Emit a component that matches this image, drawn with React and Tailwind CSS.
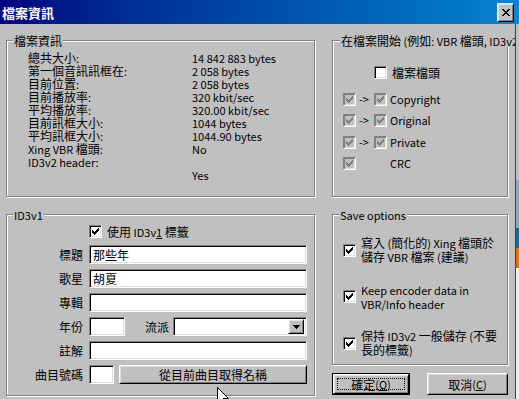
import React from 'react';

// classic win9x bevels
const sunken = 'border border-t-[#808080] border-l-[#808080] border-b-white border-r-white shadow-[inset_1px_1px_0_#000,inset_-1px_-1px_0_#dfdfdf]';
const raised = 'bg-[#c0c0c0] border border-t-white border-l-white border-b-black border-r-black shadow-[inset_1px_1px_0_#dfdfdf,inset_-1px_-1px_0_#808080]';
const etched = 'border border-[#808080] shadow-[inset_1px_1px_0_#fff,1px_1px_0_#fff] p-0 m-0 min-w-0';

// latin runs are narrower than the cjk glyphs in the original font
const tx = (s) =>
  s.split(/([\x20-\x7e]+)/).map((p, i) =>
    i % 2 ? (
      <span key={i} className="text-[11px]">
        {p}
      </span>
    ) : (
      p
    )
  );

const checkPx = [
  [6, 0, 1], [5, 1, 2], [0, 2, 1], [4, 2, 3], [0, 3, 2], [3, 3, 3], [0, 4, 5], [1, 5, 3], [2, 6, 1],
];

function Check({ checked, disabled }) {
  return (
    <span
      className={`w-[13px] h-[13px] shrink-0 flex items-center justify-center border border-t-[#808080] border-l-[#808080] border-b-white border-r-white ${
        disabled
          ? 'bg-[#c0c0c0] shadow-[inset_1px_1px_0_#808080,inset_-1px_-1px_0_#dfdfdf]'
          : 'bg-white shadow-[inset_1px_1px_0_#000,inset_-1px_-1px_0_#dfdfdf]'
      }`}
    >
      {checked && (
        <svg width="7" height="7" viewBox="0 0 7 7" shapeRendering="crispEdges">
          {checkPx.map(([x, y, w], i) => (
            <rect key={i} x={x} y={y} width={w} height="1" fill={disabled ? '#808080' : '#000'} />
          ))}
        </svg>
      )}
    </span>
  );
}

function Group({ title, className, legendClass = 'ml-[6px]', children }) {
  return (
    <fieldset className={`${etched} ${className}`}>
      <legend className={`${legendClass} px-[1px] h-[13px] leading-[13px] whitespace-nowrap bg-[#c0c0c0]`}>{tx(title)}</legend>
      {children}
    </fieldset>
  );
}

const info = [
  ['總共大小:', '14 842 883 bytes'],
  ['第一個音訊訊框在:', '2 058 bytes'],
  ['目前位置:', '2 058 bytes'],
  ['目前播放率:', '320 kbit/sec'],
  ['平均播放率:', '320.00 kbit/sec'],
  ['目前訊框大小:', '1044 bytes'],
  ['平均訊框大小:', '1044.90 bytes'],
  ['Xing VBR 檔頭:', 'No'],
  ['ID3v2 header:', ''],
  ['', 'Yes'],
];

const flags = [
  ['Copyright', true],
  ['Original', true],
  ['Private', true],
  ['CRC', false],
];

function Field({ label, children }) {
  return (
    <div className="flex items-center h-[19px]">
      <span className="w-[77px] text-right pr-[1px]">{label}</span>
      <div className="ml-[5px] flex items-center">{children}</div>
    </div>
  );
}

function Input({ w, value }) {
  return (
    <div className={`${sunken} bg-white h-[19px] flex items-center pl-[3px]`} style={{ width: w }}>
      {value}
    </div>
  );
}

export default function App() {
  return (
    <div className="w-[519px] h-[399px] overflow-hidden relative bg-[#c0c0c0] text-black text-[12px] leading-[13px] font-['Noto_Sans_CJK_TC',sans-serif] flex flex-col">
      <div className="h-[24px] shrink-0 flex items-center bg-linear-to-r from-[#000080] to-[#1084d0] pl-[2px] pr-[5px]">
        <span className="text-white font-bold text-[13px] leading-[15px]">檔案資訊</span>
        <button className={`${raised} ml-auto w-[17px] h-[19px] flex items-center justify-center`}>
          <svg width="8" height="7" viewBox="0 0 8 7" shapeRendering="crispEdges">
            <path d="M0 0h2v1h-2zM6 0h2v1h-2zM1 1h2v1h-2zM5 1h2v1h-2zM2 2h4v1h-4zM3 3h2v1h-2zM2 4h4v1h-4zM1 5h2v1h-2zM5 5h2v1h-2zM0 6h2v1h-2zM6 6h2v1h-2z" fill="#000" />
          </svg>
        </button>
      </div>

      <div className="flex-1 flex min-h-0">
        <div className="w-[516px] shrink-0 border-r border-[#404040] overflow-hidden pl-[6px] pt-[10px] flex flex-col gap-[11px]">
          <div className="flex gap-[17px]">
            <Group title="檔案資訊" className="w-[309px] h-[163px]">
              <div className="grid grid-cols-[164px_auto] pl-[21px] pt-[4px]">
                {info.map(([k, v], i) => (
                  <React.Fragment key={i}>
                    <span className="h-[13px] whitespace-nowrap">{tx(k)}</span>
                    <span className="h-[13px] whitespace-nowrap">{tx(v)}</span>
                  </React.Fragment>
                ))}
              </div>
            </Group>
            <Group title="在檔案開始 (例如: VBR 檔頭, ID3v2 標籤)" legendClass="ml-[7px]" className="w-[176px] h-[163px]">
              <div className="pl-[10px] pt-[19px] flex flex-col">
                <div className="flex items-center h-[13px] pl-[31px]">
                  <Check />
                  <span className="ml-[5px]">檔案檔頭</span>
                </div>
                <div className="mt-[14px] flex flex-col gap-[8.3px]">
                  {flags.map(([name, arrow]) => (
                    <div key={name} className="flex items-center h-[13px]">
                      <Check checked disabled />
                      <span className="ml-[3px] w-[12px] mr-[3px] whitespace-nowrap text-[11px]">{arrow ? '->' : ''}</span>
                      {arrow ? <Check checked disabled /> : <span className="w-[13px]" />}
                      <span className="ml-[3px] text-[11px]">{name}</span>
                    </div>
                  ))}
                </div>
              </div>
            </Group>
          </div>

          <div className="flex gap-[17px]">
            <Group title="ID3v1" className="w-[309px] h-[188px]">
              <div className="flex flex-col gap-[5px] pt-[4px]">
                <div className="flex items-center h-[13px] pl-[82px] mb-[2px]">
                  <Check checked />
                  <span className="ml-[5px] whitespace-nowrap">
                    使用<span className="text-[11px]"> ID3v<span className="underline">1</span> </span>標籤
                  </span>
                </div>
                <Field label="標題"><Input w={218} value="那些年" /></Field>
                <Field label="歌星"><Input w={218} value="胡夏" /></Field>
                <Field label="專輯"><Input w={218} /></Field>
                <Field label="年份">
                  <Input w={36} />
                  <span className="ml-[20px] w-[24px]">流派</span>
                  <div className={`${sunken} bg-white h-[19px] w-[134px] ml-[4px] flex items-center justify-end pr-[2px]`}>
                    <div className={`${raised} w-[16px] h-[15px] flex items-center justify-center`}>
                      <svg width="7" height="4" viewBox="0 0 7 4" shapeRendering="crispEdges">
                        <path d="M0 0h7v1h-7zM1 1h5v1h-5zM2 2h3v1h-3zM3 3h1v1h-1z" fill="#000" />
                      </svg>
                    </div>
                  </div>
                </Field>
                <Field label="註解"><Input w={218} /></Field>
                <Field label="曲目號碼">
                  <Input w={25} />
                  <button className={`${raised} ml-[5px] w-[188px] h-[19px] flex items-center justify-center`}>
                    從目前曲目取得名稱
                  </button>
                </Field>
              </div>
            </Group>

            <div className="w-[177px] flex flex-col">
              <Group title="Save options" className="w-[176px] h-[157px]">
                <div className="pl-[10px] pt-[15px] flex flex-col gap-[18.5px]">
                  {[
                    ['寫入 (簡化的) Xing 檔頭於', '儲存 VBR 檔案 (建議)'],
                    ['Keep encoder data in', 'VBR/Info header'],
                    ['保持 ID3v2 一般儲存 (不要', '長的標籤)'],
                  ].map(([a, b]) => (
                    <div key={a} className="flex items-center">
                      <Check checked />
                      <span className="ml-[5px] whitespace-nowrap">
                        {tx(a)}
                        <br />
                        {tx(b)}
                      </span>
                    </div>
                  ))}
                </div>
              </Group>
              <div className="flex gap-[17px] mt-[8px]">
                <button className="w-[78px] h-[22px] border border-black flex">
                  <span className={`${raised} flex-1 flex p-[3px]`}>
                    <span className="flex-1 border border-dotted border-black flex items-center justify-center">
                      確定<span className="text-[11px]">(<span className="underline">O</span>)</span>
                    </span>
                  </span>
                </button>
                <button className={`${raised} w-[81px] h-[22px] flex items-center justify-center`}>
                  取消<span className="text-[11px]">(<span className="underline">C</span>)</span>
                </button>
              </div>
            </div>
          </div>
        </div>

        <div className="w-[3px] flex flex-col">
          <div className="h-[156px] bg-[#c0c0c0]" />
          <div className="h-[48px] bg-[#8fa8bf]" />
          <div className="h-[20px] bg-[#1e6a96]" />
          <div className="h-[20px] bg-[#d87018]" />
          <div className="flex-1 bg-[#f0f0f0]" />
        </div>
      </div>

      <svg className="absolute left-[217px] top-[387px]" width="12" height="19" viewBox="0 0 12 19" shapeRendering="crispEdges">
        <path d="M0.5 0.5V16.5L4.5 12.5L7 18.5L9 17.5L6.5 11.5H11.5Z" fill="#fff" stroke="#000" />
      </svg>
    </div>
  );
}
